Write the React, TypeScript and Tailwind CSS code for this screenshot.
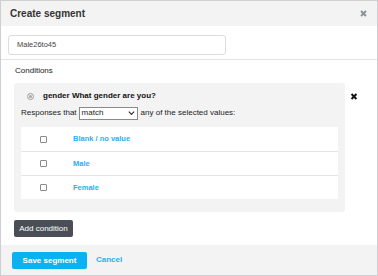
import React from 'react';

const values = ['Blank / no value', 'Male', 'Female'];

function Cross({ className }: { className: string }) {
  return (
    <svg viewBox="0 0 10 10" className={className} fill="none" stroke="currentColor" strokeWidth="2.8">
      <path d="M1.5 1.5 L8.5 8.5 M8.5 1.5 L1.5 8.5" />
    </svg>
  );
}

export default function App() {
  return (
    <div className="w-[378px] h-[276px] bg-white border border-[#cfcfd3] flex flex-col font-[family-name:Liberation_Sans,Arial,sans-serif] text-[#222]">
      {/* header */}
      <div className="h-[25px] bg-[#f3f3f3] flex items-center justify-between pl-[9px] pr-[10px] shrink-0">
        <span className="text-[10px] leading-[12px] font-bold text-[#333]">Create segment</span>
        <Cross className="w-[7px] h-[7px] text-[#8b909a]" />
      </div>

      <div className="px-[7px] pt-[9px] pb-[4px] shrink-0">
        <div className="w-[218px] h-[20px] border border-[#dcdcdc] rounded-[3px] flex items-center pl-[8px] text-[7.5px] text-[#444]">
          Male26to45
        </div>
      </div>

      <div className="border-t border-[#e4e4e4] flex flex-col pl-[13px] pt-[4px] shrink-0">
        <div className="h-[14px] flex items-center pl-[1px] text-[8px] text-[#222]">Conditions</div>

        <div className="flex items-start mt-[5px]">
          <div className="w-[331px] bg-[#f3f3f3] rounded-[3px] pl-[7px] pr-[7px] pt-[6px] pb-[13px]">
            <div className="flex items-center h-[14px] pl-[6px]">
              <span className="w-[7px] h-[7px] rounded-full border border-[#9a9a9a] flex items-center justify-center">
                <span className="w-[3px] h-[3px] rounded-full bg-[#a5a5a5]" />
              </span>
              <span className="ml-[9px] text-[8px] font-bold text-[#111]">gender What gender are you?</span>
            </div>
            <div className="flex items-center h-[14px] mt-[3px] text-[8px] text-[#222]">
              <span>Responses that</span>
              <div className="ml-[2px] w-[59px] h-[13px] border border-[#8a8a8a] bg-white flex items-center justify-between pl-[2px] pr-[2px] text-[8px] text-[#222]">
                <span>match</span>
                <svg viewBox="0 0 10 6" className="w-[7px] h-[4px]" fill="none" stroke="#222" strokeWidth="1.6">
                  <path d="M1 1 L5 5 L9 1" />
                </svg>
              </div>
              <span className="ml-[3px]">any of the selected values:</span>
            </div>
            <div className="mt-[7px] bg-white">
              {values.map((v, i) => (
                <div
                  key={v}
                  className={`h-[24px] flex items-center ${i > 0 ? 'border-t border-[#e6e6e6]' : ''}`}
                >
                  <span className="ml-[19px] w-[7px] h-[7px] border border-[#8a8a8a] rounded-[1px] bg-white" />
                  <span className="ml-[26px] text-[7.5px] font-bold text-[#27b0ef]">{v}</span>
                </div>
              ))}
            </div>
          </div>
          <Cross className="ml-[5px] mt-[10px] w-[8px] h-[7px] text-[#111]" />
        </div>

        <div className="flex mt-[8px] mb-[8px]">
          <button className="h-[17px] w-[59px] bg-[#4a4f57] rounded-[2px] text-[8px] leading-[17px] text-white">Add condition</button>
        </div>
      </div>

      <div className="flex-1 bg-[#f3f3f3] flex items-center pl-[11px]">
        <button className="w-[75px] h-[17px] bg-[#0cb1f3] rounded-[2px] text-[8px] leading-[17px] font-bold text-white">Save segment</button>
        <span className="ml-[9px] text-[8px] font-bold text-[#27b0ef]">Cancel</span>
      </div>
    </div>
  );
}
